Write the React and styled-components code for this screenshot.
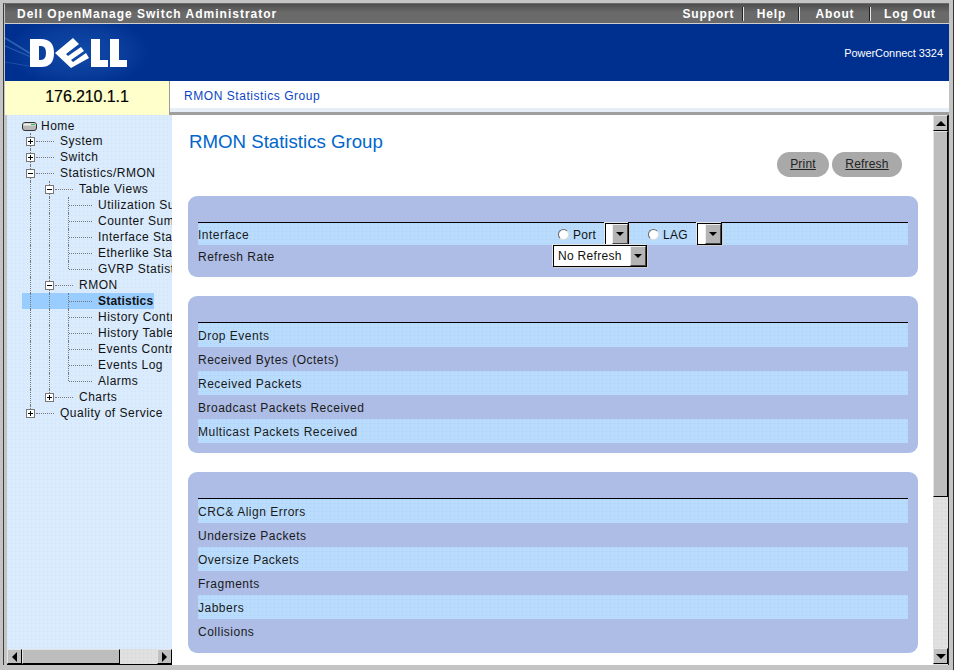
import React from 'react';
import styled, { createGlobalStyle, css } from 'styled-components';

const Global = createGlobalStyle`
  html, body { margin: 0; padding: 0; background: #c4c4c4; overflow: hidden; }
  * { box-sizing: border-box; }
  body { font-family: "Liberation Sans", Arial, sans-serif; font-size: 12px; color: #111; }
`;

const dots = (c) => css`
  background-image: conic-gradient(from 0deg at 1px 1px, transparent 75%, ${c} 0);
  background-size: 4px 4px;
`;

const Page = styled.div`
  width: 956px; height: 670px; padding: 3px 3px 5px 3px;
  background: #c4c4c4; display: flex;
  box-shadow: inset -2px 0 0 #fff, inset -3px 0 0 #333;
`;
const Shell = styled.div`
  width: 946px; border-left: 1px solid #3c3c3c; border-top: 1px solid #6a6a6a; border-right: 0;
  padding-left: 1px; display: flex; flex-direction: column; height: 662px;
`;
const TitleBar = styled.header`
  height: 19px; flex: none; display: flex; align-items: center; justify-content: space-between;
  background: linear-gradient(#4e4e4e, #6a6a6a 45%, #6a6a6a);
  color: #fff; font-weight: 700; font-size: 12px; letter-spacing: 1px; padding-left: 12px;
`;
const Nav = styled.nav`display: flex; height: 100%; align-items: center;`;
const NavLink = styled.span`
  height: 14px; line-height: 14px; text-align: center; width: ${p => p.$w}px;
  letter-spacing: .85px;
  border-right: ${p => p.$last ? '0' : '1px solid #e6e6e6'};
  box-shadow: ${p => p.$last ? 'none' : 'inset -1px 0 0 #222'};
`;
const Rule = styled.div`height: 1px; background: #cfcfcf; flex: none;`;
const Banner = styled.div`
  height: 57px; flex: none; display: flex; align-items: center; justify-content: space-between;
  background: radial-gradient(ellipse 72px 36px at 74px 28px, #0f4aa8 0%, #0a3d9c 60%, transparent 100%), #00308f;
  color: #fff; padding-right: 6px; font-size: 11px; overflow: hidden;
`;
const ModelName = styled.span`letter-spacing: -0.05px; padding-top: 1px;`;
const LogoWrap = styled.svg`width: 150px; height: 57px; display: block; flex: none;`;
const InfoRow = styled.div`height: 34px; flex: none; display: flex;`;
const Address = styled.div`
  width: 164px; background: #ffffcc; font-size: 16px; text-align: center; line-height: 32px; color: #000;
  -webkit-text-stroke: .2px #000; letter-spacing: -.1px;
`;
const Crumb = styled.div`
  flex: 1; border-left: 1px solid #9b9b9b; border-bottom: 3px solid #9f9f9f;
  box-shadow: inset 0 -4px 0 #e8eef7; background: #fff; color: #0b45c4; padding: 6px 0 0 14px; line-height: 18px;
  letter-spacing: .55px;
`;
const Body = styled.div`height: 550px; flex: none; display: flex; padding-left: 2px; background: #c4c4c4; `;
const Sidebar = styled.aside`width: 165px; flex: none; display: flex; flex-direction: column;`;
const TreeArea = styled.div`
  flex: 1; overflow: hidden; padding-top: 2px; background-color: #d9ebfc; ${dots('#cfe3f8')};
`;
const Row = styled.div`
  height: 16px; display: flex; white-space: nowrap; padding-left: ${p => p.$pad}px; line-height: 16px;
  letter-spacing: .5px; width: 300px;
  ${p => p.$selected && css`background: linear-gradient(#9cf, #9cf) 15px 0 / 132px 100% no-repeat;`}
`;
const Guide = styled.span`
  width: 19px; flex: none; border-left: 1px dotted ${p => p.$on ? '#777' : 'transparent'};
`;
const Branch = styled.span`
  flex: none; display: flex; align-items: center; height: 100%; position: relative;
  &::before {
    content: ''; position: absolute; left: 0; top: 0; bottom: ${p => p.$last ? '8px' : '0'};
    border-left: 1px dotted #777;
  }
`;
const Expander = styled.span`
  width: 9px; height: 9px; margin-left: -4px; border: 1px solid #777; background: #fff; position: relative; flex: none; z-index: 1;
  &::before { content: ''; position: absolute; left: 1px; right: 1px; top: 3px; height: 1px; background: #000; }
  &::after { content: ''; position: absolute; left: 3px; top: 1px; bottom: 1px; width: 1px; background: #000; display: ${p => p.$open ? 'none' : 'block'}; }
`;
const Connector = styled.span`
  width: ${p => p.$w}px; border-top: 1px dotted #777; flex: none; margin-left: ${p => p.$ml}px;
`;
const Label = styled.span`margin-left: ${p => p.$ml}px; font-weight: ${p => p.$bold ? 700 : 400}; letter-spacing: ${p => p.$bold ? '.2px' : 'inherit'}; color: #111; margin-top: ${p => p.$mt || 0}px;`;
const DriveIcon = styled.svg`width: 16px; height: 12px; margin-top: 3px; flex: none; display: block;`;

const HBar = styled.div`height: 16px; flex: none; display: flex; background-color: #e0e0e0; ${dots('#d2d2d2')}; border-bottom: 1px solid #000;`;
const VBar = styled.div`width: 16px; flex: none; display: flex; flex-direction: column; padding-bottom: 1px; background-color: #e0e0e0; ${dots('#d2d2d2')}; border-right: 1px solid #222;`;
const ArrowBtn = styled.div`
  width: ${p => p.$w || 15}px; height: ${p => p.$h || 16}px; flex: none; background: #c0c0c0; display: flex; align-items: center; justify-content: center;
  border-top: 1px solid #e4e4e4; border-left: 1px solid #e4e4e4; border-right: 1px solid #000; border-bottom: 1px solid #000;
`;
const Thumb = styled.div`
  ${p => p.$h ? `width: ${p.$h}px; height: 100%;` : `height: ${p.$v}px; width: 100%;`}
  background: #bdbdbd; flex: none;
  border-top: 1px solid #e4e4e4; border-left: 1px solid #e4e4e4; border-right: 1px solid #000; border-bottom: 1px solid #000;
`;
const Grow = styled.div`flex: 1;`;
const Tri = styled.span`
  width: 0; height: 0; display: block;
  ${p => p.$dir === 'up' && 'border: 4px solid transparent; border-top: 0; border-bottom: 5px solid #000; border-left-width: 5px; border-right-width: 5px;'}
  ${p => p.$dir === 'down' && 'border: 4px solid transparent; border-bottom: 0; border-top: 5px solid #000; border-left-width: 5px; border-right-width: 5px;'}
  ${p => p.$dir === 'left' && 'border: 4px solid transparent; border-left: 0; border-right: 5px solid #000; border-top-width: 5px; border-bottom-width: 5px;'}
  ${p => p.$dir === 'right' && 'border: 4px solid transparent; border-right: 0; border-left: 5px solid #000; border-top-width: 5px; border-bottom-width: 5px;'}
`;

const Main = styled.main`flex: 1; min-width: 0; background: #fff; padding: 16px 15px 0 16px; overflow: hidden;`;
const Heading = styled.h1`margin: 0 0 0 1px; font-size: 18.67px; line-height: 21px; font-weight: 400; color: #0066cc; height: 21px;`;
const Actions = styled.div`display: flex; justify-content: flex-end; gap: 3px; padding-right: 16px; height: 25px;`;
const Pill = styled.span`
  height: 25px; line-height: 25px; width: ${p => p.$w}px; text-align: center; border-radius: 13px;
  background: #a9a9a9; color: #222; text-decoration: underline; letter-spacing: .2px;
`;
const Panel = styled.section`
  margin-top: 19px; background: #adbde6; border-radius: 9px; padding: 26px 10px 10px; width: 730px;
`;
const Table = styled.div`border-top: 1px solid #000;`;
const TRow = styled.div`
  height: ${p => p.$h || 24}px; display: grid; grid-template-columns: 355px 1fr; align-items: center; letter-spacing: .5px;
  ${p => p.$tint && css`background-color: #b9dcfd; ${dots('#a9cdf2')};`}
`;
const RowText = styled.span`color: #1a1a1a; padding-top: ${p => p.$pt || 1}px;`;
const Controls = styled.div`display: flex; align-items: center; letter-spacing: 0; height: 100%;`;
const Radio = styled.span`
  width: 11px; height: 11px; border-radius: 50%; background: #fff; border: 1px solid #666; border-right-color: #ddd; border-bottom-color: #ddd;
  margin-left: ${p => p.$ml}px; flex: none;
`;
const RadioLabel = styled.span`margin-left: 4px; margin-top: 2px; width: ${p => p.$w}px; flex: none; letter-spacing: .3px;`;
const Select = styled.span`
  width: ${p => p.$w}px; height: 22px; flex: none; display: flex; align-items: center; justify-content: flex-end;
  background: #fff; border: 1px solid #000; box-shadow: 1px 1px 0 #cfcfcf, -1px -1px 0 #e6e6e6;
`;
const SelectText = styled.span`flex: 1; padding-left: 4px; letter-spacing: .3px; color: #111;`;
const SelectBtn = styled.span`
  width: 16px; height: 100%; background: #b4b4b4; flex: none; display: flex; align-items: center; justify-content: center;
  border-left: 1px solid #eee; border-top: 1px solid #eee; border-right: 1px solid #444; border-bottom: 1px solid #444;
`;
const Caret = styled.span`display: block; width: 0; height: 0; border: 4px solid transparent; border-bottom: 0; border-top: 4px solid #000;`;

const Logo = () => (
  <LogoWrap viewBox="0 0 150 57">
    <g stroke="#5f9bd8" fill="none" opacity=".45">
      <path d="M0 14 L26 30" strokeWidth="1.6" />
      <path d="M0 22 L26 33" strokeWidth="1" />
      <path d="M0 38 L24 42" strokeWidth="1" opacity=".6" />
    </g>
    <g fill="#fff" transform="translate(24 14)">
      <path fillRule="evenodd" d="M1 1H12Q25 1 25 15 25 29 12 29H1ZM10 8V22H12Q17 22 17 15 17 8 12 8Z" />
      <path d="M26 15L44 0 50 6 37 16 39 18 52 9 55 13 42 22 44 24 57 15 60 20 42 30Z" />
      <path d="M62 1H71V22H79V29H62Z" />
      <path d="M81 1H90V22H98V29H81Z" />
    </g>
  </LogoWrap>
);

const Drive = () => (
  <DriveIcon viewBox="0 0 16 12">
    <rect x=".5" y="2.5" width="14" height="8" rx="2.5" fill="#b8b8b8" stroke="#333" />
    <rect x="1.5" y="3.5" width="12" height="2" fill="#eee" />
    <rect x="9" y="4" width="4" height="1" fill="#2fbf4a" />
  </DriveIcon>
);

const tree = [
  { t: 'System', g: [], x: 'closed' },
  { t: 'Switch', g: [], x: 'closed' },
  { t: 'Statistics/RMON', g: [], x: 'open' },
  { t: 'Table Views', g: [1], x: 'open' },
  { t: 'Utilization Summary', g: [1, 1] },
  { t: 'Counter Summary', g: [1, 1] },
  { t: 'Interface Statistics', g: [1, 1] },
  { t: 'Etherlike Statistics', g: [1, 1] },
  { t: 'GVRP Statistics', g: [1, 1], last: true },
  { t: 'RMON', g: [1], x: 'open' },
  { t: 'Statistics', g: [1, 1], sel: true },
  { t: 'History Control', g: [1, 1] },
  { t: 'History Table', g: [1, 1] },
  { t: 'Events Control', g: [1, 1] },
  { t: 'Events Log', g: [1, 1] },
  { t: 'Alarms', g: [1, 1], last: true },
  { t: 'Charts', g: [1], x: 'closed', last: true },
  { t: 'Quality of Service', g: [], x: 'closed', last: true },
];

const TreeRow = ({ n }) => (
  <Row $pad={23} $selected={n.sel}>
    {n.g.map((on, i) => <Guide key={i} $on={on} />)}
    <Branch $last={n.last}>
      {n.x ? <Expander $open={n.x === 'open'} /> : null}
      {n.x
        ? <Connector $ml={1} $w={18} />
        : <Connector $ml={1} $w={23} />}
    </Branch>
    <Label $ml={6} $bold={n.sel}>{n.t}</Label>
  </Row>
);

const Data = ({ rows }) => (
  <Table>
    {rows.map((r, i) => <TRow key={r} $tint={i % 2 === 0}><RowText>{r}</RowText></TRow>)}
  </Table>
);

export default function App() {
  return (
    <Page>
      <Global />
      <Shell>
        <TitleBar>
          <span>Dell OpenManage Switch Administrator</span>
          <Nav>
            <NavLink $w={70}>Support</NavLink>
            <NavLink $w={56}>Help</NavLink>
            <NavLink $w={71}>About</NavLink>
            <NavLink $w={78} $last>Log Out</NavLink>
          </Nav>
        </TitleBar>
        <Rule />
        <Banner>
          <Logo />
          <ModelName>PowerConnect 3324</ModelName>
        </Banner>
        <InfoRow>
          <Address>176.210.1.1</Address>
          <Crumb>RMON Statistics Group</Crumb>
        </InfoRow>
        <Body>
          <Sidebar>
            <TreeArea>
              <Row $pad={15}><Drive /><Label $ml={3} $mt={1}>Home</Label></Row>
              {tree.map(n => <TreeRow key={n.t + n.g.length} n={n} />)}
            </TreeArea>
            <HBar>
              <ArrowBtn $w={15} $h={15}><Tri $dir="left" /></ArrowBtn>
              <Thumb $h={98} />
              <Grow />
              <ArrowBtn $w={15} $h={15}><Tri $dir="right" /></ArrowBtn>
            </HBar>
          </Sidebar>
          <Main>
            <Heading>RMON Statistics Group</Heading>
            <Actions>
              <Pill $w={52}>Print</Pill>
              <Pill $w={70}>Refresh</Pill>
            </Actions>
            <Panel>
              <Table>
                <TRow $tint $h={22}>
                  <RowText>Interface</RowText>
                  <Controls>
                    <Radio $ml={5} />
                    <RadioLabel $w={32}>Port</RadioLabel>
                    <Select $w={24}><SelectBtn><Caret /></SelectBtn></Select>
                    <Radio $ml={19} />
                    <RadioLabel $w={34}>LAG</RadioLabel>
                    <Select $w={25}><SelectBtn><Caret /></SelectBtn></Select>
                  </Controls>
                </TRow>
                <TRow $h={22}>
                  <RowText>Refresh Rate</RowText>
                  <Controls>
                    <Select $w={94}><SelectText>No Refresh</SelectText><SelectBtn><Caret /></SelectBtn></Select>
                  </Controls>
                </TRow>
              </Table>
            </Panel>
            <Panel>
              <Data rows={['Drop Events', 'Received Bytes (Octets)', 'Received Packets', 'Broadcast Packets Received', 'Multicast Packets Received']} />
            </Panel>
            <Panel>
              <Data rows={['CRC& Align Errors', 'Undersize Packets', 'Oversize Packets', 'Fragments', 'Jabbers', 'Collisions']} />
            </Panel>
          </Main>
          <VBar>
            <ArrowBtn $w={15}><Tri $dir="up" /></ArrowBtn>
            <Thumb $v={366} />
            <Grow />
            <ArrowBtn $w={15}><Tri $dir="down" /></ArrowBtn>
          </VBar>
        </Body>
      </Shell>
    </Page>
  );
}
